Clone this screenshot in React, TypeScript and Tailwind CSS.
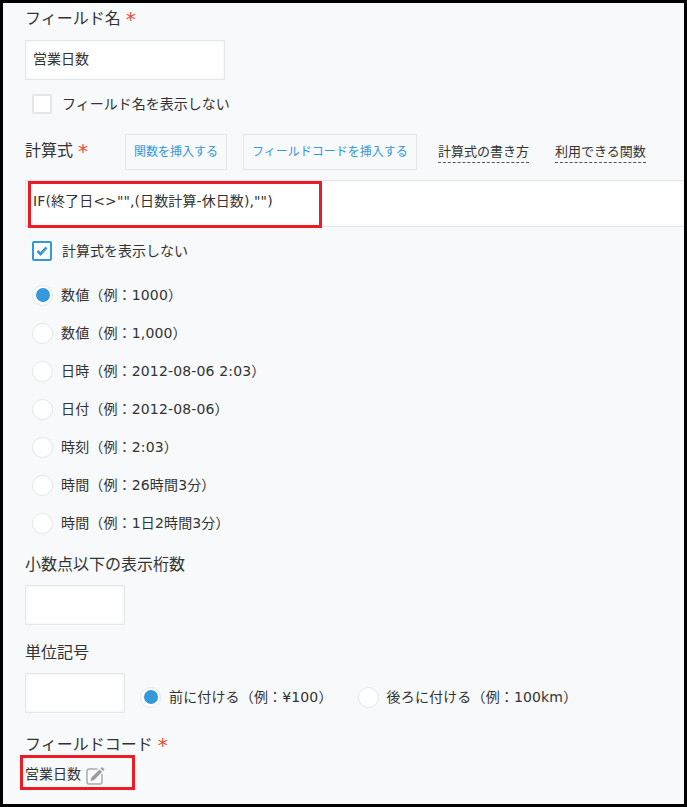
import type { ReactNode } from "react";

const font = "font-['DejaVu_Sans','Noto_Sans_CJK_JP',sans-serif]";

function Req() {
  return <span className="ml-[5px] align-[-2px] text-[20px] leading-none text-[#e74c3c]">*</span>;
}

function Radio({ checked, children }: { checked?: boolean; children: ReactNode }) {
  return (
    <div className="flex h-[38px] items-center">
      <span className="flex h-[21px] w-[21px] items-center justify-center rounded-full border border-[#e3e7e8] bg-white">
        {checked && <span className="h-[14px] w-[14px] rounded-full bg-[#3498db]" />}
      </span>
      <span className="ml-[8px] text-[14px] tracking-[0.15px] text-[#333]">{children}</span>
    </div>
  );
}

function PencilIcon() {
  return (
    <svg width="20" height="20" viewBox="0 0 20 20" className="ml-[5px]">
      <path d="M11.500 4H3A2 2 0 0 0 1 6v11a2 2 0 0 0 2 2h11a2 2 0 0 0 2-2V9" fill="none" stroke="#aaa" strokeWidth="1.500" />
      <path d="M5.500 12.500 13.500 4.500l2.500 2.500-8 8-3.500 1z" fill="#999" />
      <path d="M14.500 3.500 16 2l2.500 2.500L17 6z" fill="#999" />
    </svg>
  );
}

export default function App() {
  return (
    <div className={`${font} h-[807px] w-[687px] overflow-hidden bg-black p-[3px]`}>
      <div className="relative h-full overflow-hidden bg-[#f7f9fa] pl-[22px]">
        <div className="mt-[4px] text-[16px] leading-[24px] text-[#333]">
          フィールド名
          <Req />
        </div>
        <div className="mt-[9px] flex h-[40px] w-[200px] items-center border border-[#e3e7e8] bg-white pb-[2px] pl-[7px] text-[14px] text-[#333] shadow-[inset_0_0_4px_#f0f2f3]">
          営業日数
        </div>
        <div className="ml-[7px] mt-[14px] flex h-[20px] items-center">
          <span className="h-[20px] w-[20px] rounded-[2px] border-2 border-[#e3e7e8] bg-white" />
          <span className="ml-[10px] text-[14px] text-[#333]">フィールド名を表示しない</span>
        </div>

        <div className="mt-[20px] flex h-[36px] items-center">
          <div className="mb-[3px] w-[100px] text-[16px] text-[#333]">
            計算式
            <Req />
          </div>
          <div className="flex h-[36px] w-[102px] items-center justify-center border border-[#e3e7e8] text-[12px] text-[#3498db]">
            関数を挿入する
          </div>
          <div className="ml-[16px] flex h-[36px] w-[174px] items-center justify-center border border-[#e3e7e8] text-[12px] text-[#3498db]">
            フィールドコードを挿入する
          </div>
          <span className="ml-[21px] border-b border-dashed border-[#555] text-[13px] leading-[20px] text-[#333]">
            計算式の書き方
          </span>
          <span className="ml-[26px] border-b border-dashed border-[#555] text-[13px] leading-[20px] text-[#333]">
            利用できる関数
          </span>
        </div>

        <div className="mt-[10px] flex h-[47px] items-center border-y border-l border-[#e3e7e8] bg-white pb-[4px] pl-[7px] text-[14px] tracking-[0.1px] text-[#333] shadow-[inset_0_0_4px_#f0f2f3]">
          IF(終了日&lt;&gt;"",(日数計算-休日数),"")
        </div>

        <div className="ml-[7px] mt-[14px] flex h-[20px] items-center">
          <span className="flex h-[20px] w-[20px] items-center justify-center rounded-[2px] border-2 border-[#3498db] bg-white">
            <svg width="12" height="10" viewBox="0 0 12 10">
              <path d="M1.500 5 4.500 8 10.500 1.500" fill="none" stroke="#3498db" strokeWidth="2.600" />
            </svg>
          </span>
          <span className="ml-[10px] text-[14px] text-[#333]">計算式を表示しない</span>
        </div>

        <div className="ml-[7px] mt-[15px]">
          <Radio checked>数値（例：1000）</Radio>
          <Radio>数値（例：1,000）</Radio>
          <Radio>日時（例：2012-08-06 2:03）</Radio>
          <Radio>日付（例：2012-08-06）</Radio>
          <Radio>時刻（例：2:03）</Radio>
          <Radio>時間（例：26時間3分）</Radio>
          <Radio>時間（例：1日2時間3分）</Radio>
        </div>

        <div className="mt-[11px] text-[16px] leading-[24px] text-[#333]">小数点以下の表示桁数</div>
        <div className="mt-[8px] h-[40px] w-[100px] border border-[#e3e7e8] bg-white shadow-[inset_0_0_4px_#f0f2f3]" />

        <div className="mt-[16px] text-[16px] leading-[24px] text-[#333]">単位記号</div>
        <div className="mt-[8px] flex items-start">
          <div className="h-[40px] w-[100px] border border-[#e3e7e8] bg-white shadow-[inset_0_0_4px_#f0f2f3]" />
          <div className="ml-[15px] mt-[5px] flex items-center">
            <Radio checked>前に付ける（例：¥100）</Radio>
            <div className="ml-[25px]">
              <Radio>後ろに付ける（例：100km）</Radio>
            </div>
          </div>
        </div>

        <div className="mt-[17px] text-[16px] leading-[24px] text-[#333]">
          フィールドコード
          <Req />
        </div>
        <div className="mt-[7px] flex items-center text-[14px] text-[#333]">
          営業日数
          <PencilIcon />
        </div>

        {/* 赤枠の注釈 */}
        <div className="absolute left-[25px] top-[178px] h-[47px] w-[294px] border-[3px] border-[#ed1c24]" />
        <div className="absolute left-[17px] top-[752px] h-[35px] w-[115px] border-[3px] border-[#ed1c24]" />
      </div>
    </div>
  );
}
